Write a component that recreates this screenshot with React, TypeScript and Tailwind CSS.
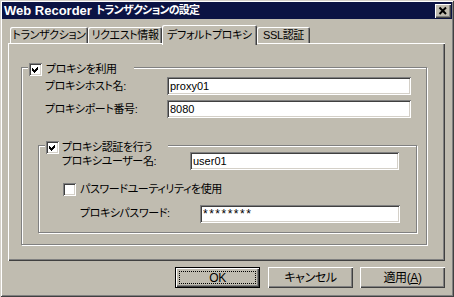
import React from "react";

function Check({ checked }: { checked?: boolean }) {
  return (
    <span className="flex h-[13px] w-[13px] shrink-0 bg-white shadow-[inset_1px_1px_0_#808080,inset_-1px_-1px_0_#fff,inset_2px_2px_0_#404040,inset_-2px_-2px_0_#d4d0c8]">
      {checked && (
        <svg width="13" height="13" viewBox="0 0 13 13" shapeRendering="crispEdges">
          <path d="M3 5 L5 7 L9 3 L9 6 L5 10 L3 8 Z" fill="#000" />
        </svg>
      )}
    </span>
  );
}

function Field({ value, className }: { value: string; className: string }) {
  return (
    <input
      readOnly
      value={value}
      className={
        "h-[18px] bg-white pl-[3px] outline-none shadow-[inset_1px_1px_0_#808080,inset_-1px_-1px_0_#fff,inset_2px_2px_0_#404040,inset_-2px_-2px_0_#d4d0c8] " +
        className
      }
    />
  );
}

function Button({ children, primary }: { children: React.ReactNode; primary?: boolean }) {
  if (primary) {
    return (
      <div className="h-[21px] w-[85px] border border-black">
        <div className="flex h-full w-full items-center justify-center p-[3px] shadow-[inset_1px_1px_0_#fff,inset_-1px_-1px_0_#404040,inset_-2px_-2px_0_#808080]">
          <div className="flex h-full w-full items-center justify-center border border-dotted border-black text-[12px]">
            {children}
          </div>
        </div>
      </div>
    );
  }
  return (
    <div className="flex h-[21px] w-[85px] items-center justify-center text-[12px] shadow-[inset_1px_1px_0_#fff,inset_-1px_-1px_0_#404040,inset_-2px_-2px_0_#808080]">
      {children}
    </div>
  );
}

function Tab({ label, width }: { label: string; width: string }) {
  return (
    <div
      className={
        "flex h-[16px] items-center justify-center rounded-t-[2px] pt-[1px] text-[11px] whitespace-nowrap shadow-[inset_1px_1px_0_#fff,inset_-1px_0_0_#404040,inset_-2px_0_0_#808080] " +
        width
      }
    >
      {label}
    </div>
  );
}

export default function App() {
  return (
    <div className="flex h-[297px] w-[454px] flex-col overflow-hidden bg-[#c0bcb0] p-[2px] font-['Liberation_Sans','Noto_Sans_CJK_JP',sans-serif] tracking-[-0.4px] text-black [font-feature-settings:'palt'] shadow-[inset_1px_1px_0_#d4d0c8,inset_-1px_-1px_0_#404040,inset_2px_2px_0_#fff,inset_-2px_-2px_0_#808080]">
      {/* title bar */}
      <div className="flex h-[17px] shrink-0 items-center justify-between bg-[#0b1343] pl-[2px] pr-[1px]">
        <span className="flex items-center gap-[4px] font-bold whitespace-nowrap text-white">
          <span className="text-[13px] tracking-normal">Web Recorder</span>
          <span className="text-[11px] tracking-[-0.8px]">トランザクションの設定</span>
        </span>
        <div className="flex h-[14px] w-[16px] items-center justify-center bg-[#c0bcb0] shadow-[inset_1px_1px_0_#fff,inset_-1px_-1px_0_#404040,inset_-2px_-2px_0_#808080]">
          <svg width="16" height="14" viewBox="0 0 16 14">
            <path d="M4.5 3.5 L11 10 M11 3.5 L4.5 10" stroke="#000" strokeWidth="2" />
          </svg>
        </div>
      </div>

      {/* tabs */}
      <div className="relative z-10 ml-[8px] mt-[6px] flex h-[18px] items-end">
        <Tab label="トランザクション" width="w-[78px]" />
        <Tab label="リクエスト情報" width="w-[74px]" />
        <div className="-mb-[2px] flex h-[20px] w-[95px] items-start justify-center rounded-t-[2px] bg-[#c0bcb0] pt-[2px] text-[11px] whitespace-nowrap shadow-[inset_1px_1px_0_#fff,inset_-1px_0_0_#404040,inset_-2px_0_0_#808080]">
          デフォルトプロキシ
        </div>
        <Tab label="SSL認証" width="w-[53px]" />
      </div>

      {/* panel */}
      <div className="ml-[6px] h-[218px] w-[437px] shrink-0 pl-[13px] pt-[24px] shadow-[inset_1px_1px_0_#fff,inset_-1px_-1px_0_#404040,inset_-2px_-2px_0_#808080]">
        <div className="relative h-[178px] w-[406px] border border-[#808080] shadow-[1px_1px_0_#fff,inset_1px_1px_0_#fff]">
          <div className="absolute -top-[7px] left-[6px] flex w-[106px] items-center gap-[4px] bg-[#c0bcb0] px-[1px]">
            <Check checked />
            <span className="text-[11px] whitespace-nowrap">プロキシを利用</span>
          </div>

          <div className="pt-[9px]">
            <div className="ml-[23px] flex items-center">
              <span className="w-[122px] text-[11px]">プロキシホスト名:</span>
              <Field value="proxy01" className="w-[244px] text-[11px] tracking-normal" />
            </div>
            <div className="ml-[23px] mt-[5px] flex items-center">
              <span className="w-[122px] text-[11px]">プロキシポート番号:</span>
              <Field value="8080" className="w-[244px] text-[11px] tracking-normal" />
            </div>

            <div className="relative ml-[16px] mt-[27px] h-[88px] w-[379px] border border-[#808080] shadow-[1px_1px_0_#fff,inset_1px_1px_0_#fff]">
              <div className="absolute -top-[7px] left-[6px] flex w-[123px] items-center gap-[3px] bg-[#c0bcb0] px-[1px]">
                <Check checked />
                <span className="text-[11px] whitespace-nowrap">プロキシ認証を行う</span>
              </div>

              <div className="pt-[6px]">
                <div className="ml-[23px] flex items-center">
                  <span className="w-[128px] text-[11px]">プロキシユーザー名:</span>
                  <Field value="user01" className="w-[209px] text-[11px] tracking-normal" />
                </div>
                <div className="ml-[24px] mt-[11px] flex items-center gap-[4px]">
                  <Check />
                  <span className="text-[11px] whitespace-nowrap">パスワードユーティリティを使用</span>
                </div>
                <div className="ml-[41px] mt-[7px] flex items-center">
                  <span className="w-[120px] text-[11px]">プロキシパスワード:</span>
                  <Field value="********" className="w-[200px] text-[12px] tracking-[1.5px]" />
                </div>
              </div>
            </div>
          </div>
        </div>
      </div>

      {/* buttons */}
      <div className="mt-[6px] flex justify-end pr-[7px]">
        <Button primary>OK</Button>
        <div className="ml-[8px]">
          <Button>キャンセル</Button>
        </div>
        <div className="ml-[7px]">
          <Button>
            <span>
              適用(<span className="underline">A</span>)
            </span>
          </Button>
        </div>
      </div>
    </div>
  );
}
